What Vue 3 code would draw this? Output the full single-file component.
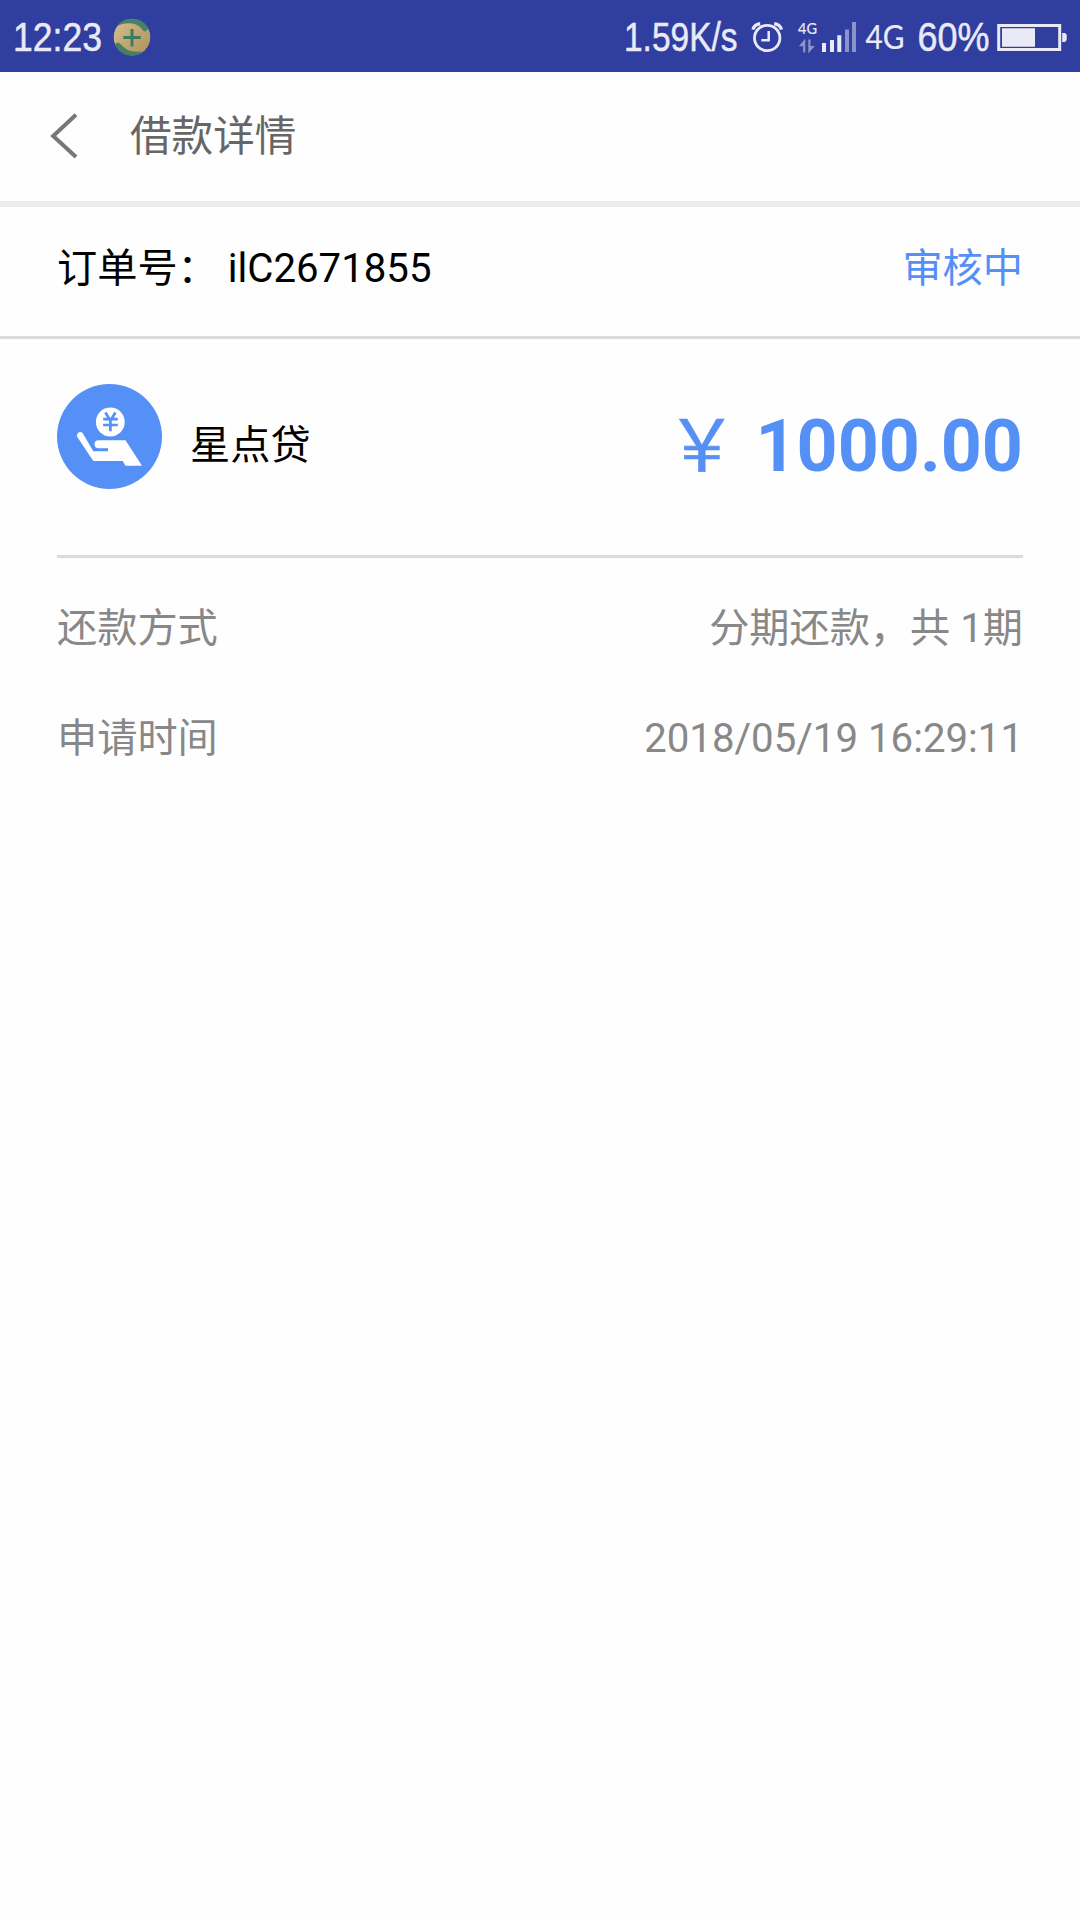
<script setup>
const details = [
  { label: '还款方式', value: '分期还款，共 1期' },
  { label: '申请时间', value: '2018/05/19 16:29:11' },
]
</script>

<template>
  <main class="page">
    <div class="status">
      <svg class="status-left" width="160" height="72" viewBox="0 0 160 72">
        <text x="13" y="50.5" font-size="41" textLength="89" lengthAdjust="spacingAndGlyphs">12:23</text>
        <clipPath id="coin"><circle cx="132" cy="37.2" r="18.5" /></clipPath>
        <linearGradient id="gold" x1="0" y1="0" x2="1" y2="1">
          <stop offset="0" stop-color="#d9bd91" />
          <stop offset="1" stop-color="#aa9159" />
        </linearGradient>
        <g clip-path="url(#coin)">
          <circle cx="132" cy="37.2" r="18.5" fill="url(#gold)" />
          <path d="M116 26.5C120 21 125 17 132 17h16v12l-2.5 2.5c-2 0-3-1-4-3C136.500 22 125 21.500 116 26.500Z" fill="#438465" />
          <path d="M115 45c1-2.500 4-3 6-.5 5 5.500 9 8 20 7l4 7h-24l-9-9Z" fill="#438063" />
        </g>
        <path d="M123.300 37.500h17.400M132 29v17.500" stroke="#3d7d5e" stroke-width="3" fill="none" />
      </svg>
      <svg class="status-right" width="480" height="72" viewBox="600 0 480 72">
        <text x="624" y="50.5" font-size="41" textLength="113.5" lengthAdjust="spacingAndGlyphs">1.59K/s</text>
        <g fill="none" stroke="#eaeaf7" stroke-width="2.8">
          <circle cx="767.2" cy="38" r="12.7" />
          <path d="M768.7 31v9.2h-7.4" stroke-width="2.5" />
          <path d="M753.2 29.6c.3-3.2 3.2-5.600 7-5.900M781.2 29.600c-.3-3.200-3.200-5.600-7-5.900" stroke-width="3.4" />
        </g>
        <text x="798" y="33.8" font-size="15.5" class="net" textLength="19" lengthAdjust="spacingAndGlyphs">4G</text>
        <path d="M805.3 38.600v14h-2.200v-6.400h-4.300ZM808.300 53.500v-14h2.200v6.600h4.300Z" fill="#8c92cb" />
        <path d="M822 43h4v9h-4ZM830 40h4v12h-4ZM837.300 35.300h4V52h-4Z" fill="#eaeaf7" />
        <path d="M845 29.500h4V52h-4ZM852 22h4v30h-4Z" fill="#8c92cb" />
        <text x="865.5" y="48.8" font-size="32.5" class="net" textLength="39" lengthAdjust="spacingAndGlyphs">4G</text>
        <text x="917.5" y="50.5" font-size="41" textLength="72" lengthAdjust="spacingAndGlyphs">60%</text>
        <rect x="998.7" y="25.500" width="61" height="24" fill="none" stroke="#eaeaf7" stroke-width="3" />
        <path d="M1002 28.300h33v18.400h-33Z" fill="#eaeaf7" />
        <path d="M1062.200 33h2.800l1.700 1.700v5.400L1065 42h-2.800Z" fill="#eaeaf7" />
      </svg>
    </div>

    <header class="header">
      <svg class="back" width="30" height="50" viewBox="0 0 30 50">
        <path d="M27 3.800 4.200 25 27 46" fill="none" stroke="#777" stroke-width="4" />
      </svg>
      <h1>借款详情</h1>
    </header>

    <section class="order">
      <span class="order-no">订单号：&nbsp;ilC2671855</span>
      <span class="state">审核中</span>
    </section>

    <section class="card">
      <div class="product">
        <svg class="logo" width="105" height="105" viewBox="0 0 105 105">
          <circle cx="52.5" cy="52.5" r="52.5" fill="#5590f6" />
          <circle cx="53.3" cy="38" r="14.4" fill="#fff" />
          <path d="m48.400 28.500 5 8.200 5-8.200M46.200 35.200h14.600M46.200 41h14.600M53.400 35v12.200" fill="none" stroke="#5590f6" stroke-width="2.7" />
          <path d="M25.600 49 36.300 67.200H51V64.300H41.500a4 4 0 0 1 0-8H68.500L85 81.700H68.400L65.800 77H36.300L20 52.400A3.400 3.400 0 0 1 25.600 49Z" fill="#fff" />
          <path d="M22.800 51 37 72.200H68M40 67.500H51.500" fill="none" />
        </svg>
        <span class="name">星点贷</span>
        <span class="amount"><span class="yen">￥</span> 1000.00</span>
      </div>
      <div v-for="row in details" :key="row.label" class="row">
        <span>{{ row.label }}</span>
        <span>{{ row.value }}</span>
      </div>
    </section>
  </main>
</template>

<style>
body {
  margin: 0;
  background: #fefefe;
}
</style>

<style scoped>
.page {
  width: 1080px;
  height: 1920px;
  overflow: hidden;
  background: #fefefe;
  font-family: Roboto, "Noto Sans CJK SC", sans-serif;
  font-size: 40.2px;
  color: #000;
}
.status {
  display: flex;
  justify-content: space-between;
  height: 72px;
  background: #303e9f;
}
.status svg {
  display: block;
}
.status text {
  font-family: "Liberation Sans", sans-serif;
  fill: #eaeaf7;
  stroke: #eaeaf7;
  stroke-width: 0.5px;
}
.status .net {
  font-family: Lato, sans-serif;
  stroke-width: 0.2px;
}
.header {
  display: flex;
  align-items: center;
  box-sizing: border-box;
  height: 135px;
  padding: 0 0 7px 49px;
  border-bottom: 6px solid #ececec;
}
.back {
  margin-top: 6px;
}
h1 {
  margin: 8px 0 0 51px;
  font-size: 41.6px;
  line-height: 60px;
  font-weight: 400;
  color: #666;
}
.order {
  display: flex;
  justify-content: space-between;
  box-sizing: border-box;
  height: 132px;
  padding: 32px 57px 0;
  border-bottom: 3px solid #dcdcdc;
  line-height: 60px;
}
.order-no {
  white-space: pre;
}
.state {
  color: #5590f6;
}
.card {
  padding: 0 57px;
}
.product {
  display: flex;
  box-sizing: border-box;
  height: 219px;
  margin-bottom: 16px;
  padding-top: 45px;
  border-bottom: 3px solid #dcdcdc;
}
.name {
  margin: 32px 0 0 28px;
  line-height: 60px;
}
.amount {
  margin: 11px 0 0 auto;
  color: #5590f6;
  font-size: 71.7px;
  font-weight: 700;
  line-height: 104px;
}
.yen {
  font-weight: 400;
  -webkit-text-stroke: 0.6px #5590f6;
}
.row {
  display: flex;
  justify-content: space-between;
  height: 110px;
  line-height: 110px;
  color: #888;
}
</style>
